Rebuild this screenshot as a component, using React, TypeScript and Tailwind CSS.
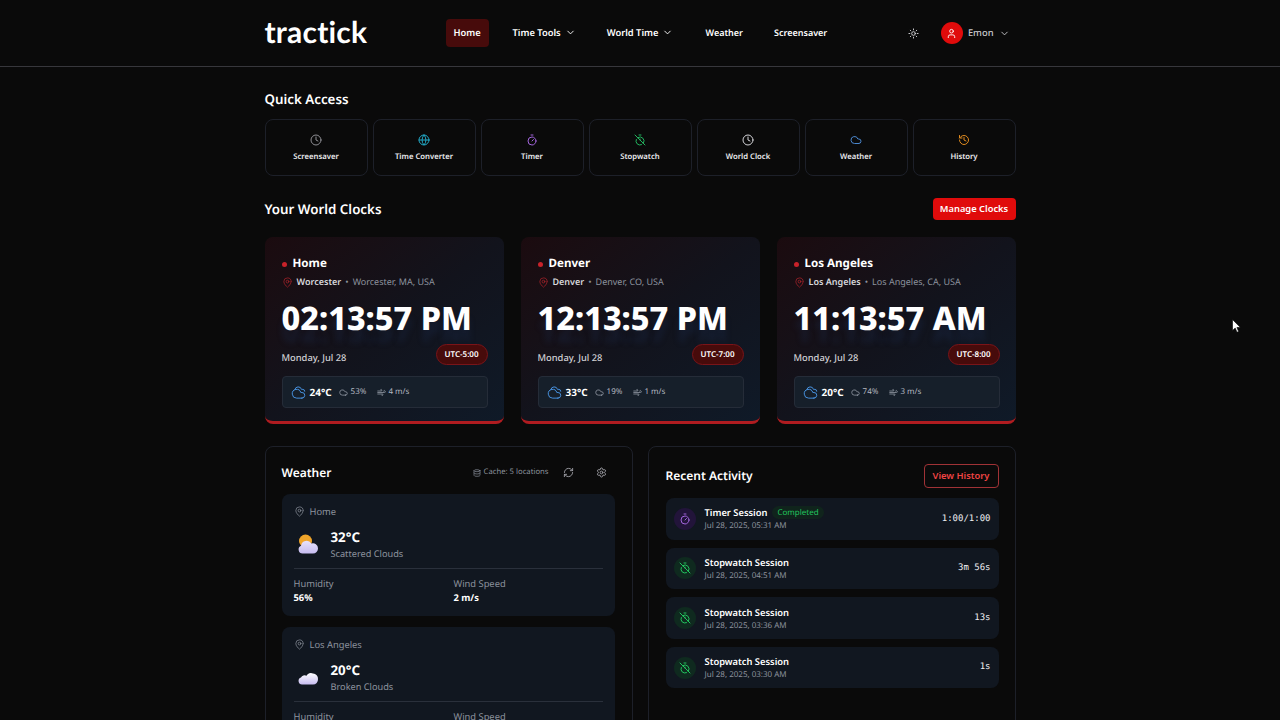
import {
  ChevronDown,
  Clock,
  Cloud,
  Cloudy,
  Database,
  Globe,
  History,
  MapPin,
  RefreshCw,
  Settings,
  Sun,
  Timer,
  TimerOff,
  User,
  Wind,
} from 'lucide-react';

const quickLinks = [
  { label: 'Screensaver', Icon: Clock, color: 'text-[#8f8f94]' },
  { label: 'Time Converter', Icon: Globe, color: 'text-[#22a7c4]' },
  { label: 'Timer', Icon: Timer, color: 'text-[#a265dc]' },
  { label: 'Stopwatch', Icon: TimerOff, color: 'text-[#22b35e]' },
  { label: 'World Clock', Icon: Clock, color: 'text-[#d4d4d8]' },
  { label: 'Weather', Icon: Cloud, color: 'text-[#4a86cc]' },
  { label: 'History', Icon: History, color: 'text-[#e08a1e]' },
];

const clocks = [
  { name: 'Home', city: 'Worcester', place: 'Worcester, MA, USA', time: '02:13:57 PM', utc: 'UTC-5:00', temp: '24°C', humidity: '53%', wind: '4 m/s' },
  { name: 'Denver', city: 'Denver', place: 'Denver, CO, USA', time: '12:13:57 PM', utc: 'UTC-7:00', temp: '33°C', humidity: '19%', wind: '1 m/s' },
  { name: 'Los Angeles', city: 'Los Angeles', place: 'Los Angeles, CA, USA', time: '11:13:57 AM', utc: 'UTC-8:00', temp: '20°C', humidity: '74%', wind: '3 m/s' },
];

const activity = [
  { title: 'Timer Session', date: 'Jul 28, 2025, 05:31 AM', value: '1:00/1:00', timer: true },
  { title: 'Stopwatch Session', date: 'Jul 28, 2025, 04:51 AM', value: '3m 56s', timer: false },
  { title: 'Stopwatch Session', date: 'Jul 28, 2025, 03:36 AM', value: '13s', timer: false },
  { title: 'Stopwatch Session', date: 'Jul 28, 2025, 03:30 AM', value: '1s', timer: false },
];

function WeatherArt({ sun }: { sun: boolean }) {
  const gradientId = sun ? 'cloud-sun' : 'cloud-plain';
  return (
    <svg width="24" height="24" viewBox="0 0 24 24">
      <defs>
        <linearGradient id={gradientId} x1="0" y1="0" x2="0" y2="1">
          <stop offset="0" stopColor={sun ? '#e8e2fb' : '#ffffff'} />
          <stop offset="1" stopColor="#c6bcf0" />
        </linearGradient>
      </defs>
      {sun && <circle cx="9.5" cy="9" r="6.5" fill="#f0a52a" />}
      {sun ? (
        <path
          d="M6.5 21.5a4 4 0 0 1-1.4-7.7 5.5 5.5 0 0 1 10.2-2.2 5 5 0 0 1 6.7 4.7 5 5 0 0 1-5 5.2z"
          fill={`url(#${gradientId})`}
        />
      ) : (
        <path
          d="M6 19.5a3.6 3.6 0 0 1-1-7 4 4 0 0 1 5.5-1.7 5 5 0 0 1 6.5-2.3 5.2 5.2 0 0 1 5 5.6 5 5 0 0 1-5 5.4z"
          fill={`url(#${gradientId})`}
        />
      )}
    </svg>
  );
}

function WeatherBlock({ name, temp, desc, humidity, wind, sun }: { name: string; temp: string; desc: string; humidity: string; wind: string; sun: boolean }) {
  return (
    <div className="rounded-lg bg-[#111720] px-[12px] pb-[11px] pt-[11px]">
      <div className="flex items-center gap-[5px] text-[9.33px] leading-[13px] text-[#8d939e]">
        <MapPin size={11} strokeWidth={1.5} />
        <span>{name}</span>
      </div>
      <div className="mt-[9px] flex items-center gap-[11px] pl-[2px]">
        <WeatherArt sun={sun} />
        <div className="pt-px">
          <div className="text-[13.33px] font-bold leading-[19px] text-white">{temp}</div>
          <div className="text-[9.2px] leading-[13px] text-[#8d939e]">{desc}</div>
        </div>
      </div>
      <div className="mt-[8px] grid grid-cols-[160px_1fr] border-t border-[#2a303b] pt-[8px]">
        <div>
          <div className="text-[9.33px] leading-[14px] text-[#8d939e]">Humidity</div>
          <div className="text-[9.33px] font-bold leading-[14px] text-white">{humidity}</div>
        </div>
        <div>
          <div className="text-[9.33px] leading-[14px] text-[#8d939e]">Wind Speed</div>
          <div className="text-[9.33px] font-bold leading-[14px] text-white">{wind}</div>
        </div>
      </div>
    </div>
  );
}

export default function App() {
  return (
    <div className="relative h-screen overflow-hidden bg-[#0a0a0a] font-['Noto_Sans',sans-serif] text-white [text-rendering:geometricPrecision]">
      <header className="flex h-[67px] justify-center border-b border-[#37373c]">
        <div className="flex w-[751px] items-center">
          <div className="w-[181px] -translate-y-px font-['Lato',sans-serif] text-[30px] font-bold leading-none tracking-[0.2px]">tractick</div>
          <nav className="flex items-center text-[9.33px] font-semibold">
            <div className="w-[43px] rounded bg-[#470b0b] py-[7px] text-center leading-[14px]">Home</div>
            <div className="ml-[24px] flex items-center gap-[4px]">Time Tools <ChevronDown size={11} /></div>
            <div className="ml-[31px] flex items-center gap-[4px]">World Time <ChevronDown size={11} /></div>
            <div className="ml-[32px] text-[9px]">Weather</div>
            <div className="ml-[31px] text-[9px]">Screensaver</div>
          </nav>
          <div className="ml-auto flex items-center pr-[6px]">
            <Sun size={11} className="text-[#d4d4d8]" />
            <div className="ml-[22px] flex h-[22px] w-[22px] items-center justify-center rounded-full bg-[#e00b0b]">
              <User size={11} />
            </div>
            <span className="ml-[5px] text-[9.33px] font-medium text-[#c8c8cc]">Emon</span>
            <ChevronDown size={11} className="ml-[5px] text-[#c8c8cc]" />
          </div>
        </div>
      </header>

      <main className="mx-auto w-[751px]">
        <h2 className="mt-[24px] text-[13.33px] font-semibold leading-[17px]">Quick Access</h2>
        <div className="mt-[11px] grid grid-cols-7 gap-[5px]">
          {quickLinks.map(({ label, Icon, color }) => (
            <div key={label} className="flex h-[57px] flex-col items-center rounded-lg border border-[#1d2029] pt-[14px]">
              <Icon size={12} className={color} />
              <span className="mt-[5px] text-[7.7px] font-semibold leading-[12px] text-[#ececef]">{label}</span>
            </div>
          ))}
        </div>

        <div className="mt-[22px] flex h-[22px] items-center justify-between">
          <h2 className="translate-y-px text-[13.33px] font-semibold">Your World Clocks</h2>
          <button className="h-[22px] w-[83px] rounded bg-[#e00b0b] text-[9.33px] font-semibold">Manage Clocks</button>
        </div>

        <div className="mt-[17px] grid grid-cols-3 gap-[17px]">
          {clocks.map((clock) => (
            <div
              key={clock.name}
              className="h-[187px] rounded-lg border-b-[3px] border-[#b01c20] bg-gradient-to-br from-[#1b0b0f] via-[#12131c] to-[#0f1a28] pl-[17px] pr-[16px] pt-[18px]"
            >
              <div className="flex translate-y-px items-center gap-[6px]">
                <span className="h-[5px] w-[5px] rounded-full bg-[#c8222a]" />
                <span className="text-[11.6px] font-bold leading-[16px]">{clock.name}</span>
              </div>
              <div className="mt-[4px] flex items-center text-[9px] leading-[14px]">
                <MapPin size={11} className="mr-[4px] text-[#b3242c]" strokeWidth={1.5} />
                <span className="font-semibold text-[#d8d8dc]">{clock.city}</span>
                <span className="mx-[4px] text-[#8d939e]">•</span>
                <span className="text-[#8d939e]">{clock.place}</span>
              </div>
              <div className="mt-[9px] text-[32.4px] font-extrabold leading-[40px] [text-shadow:0_12px_6px_rgba(30,50,90,0.3)]">{clock.time}</div>
              <div className="mt-[6px] flex items-end justify-between">
                <span className="mb-px text-[9.33px] font-medium leading-[13px] text-[#d0d0d4]">Monday, Jul 28</span>
                <span className="rounded-full border border-[#7a1418] bg-[#470b0b] px-[8px] py-[3px] text-[8px] font-semibold leading-[13px]">{clock.utc}</span>
              </div>
              <div className="mt-[11px] flex h-[32px] items-center rounded border border-[#252c38] bg-[#161f2a] px-[8px]">
                <Cloudy size={15} className="text-[#4a96e6]" strokeWidth={1.5} />
                <span className="ml-[4px] text-[10px] font-bold">{clock.temp}</span>
                <Cloud size={9} className="ml-[7px] text-[#9aa0ab]" />
                <span className="ml-[3px] text-[8px] text-[#b4b8c0]">{clock.humidity}</span>
                <Wind size={9} className="ml-[11px] text-[#9aa0ab]" />
                <span className="ml-[2px] text-[8px] text-[#b4b8c0]">{clock.wind}</span>
              </div>
            </div>
          ))}
        </div>

        <div className="mt-[22px] grid grid-cols-2 gap-[15px]">
          <section className="rounded-lg border border-[#1d2029] pb-[16px] pl-[16px] pr-[17px] pt-[16px]">
            <div className="flex h-[20px] items-center justify-between">
              <h3 className="text-[12px] font-semibold">Weather</h3>
              <div className="flex items-center text-[7.7px] text-[#8d939e]">
                <Database size={8} className="mr-[3px]" />
                <span>Cache: 5 locations</span>
                <RefreshCw size={11} className="ml-[14px] text-[#a0a0a6]" />
                <Settings size={11} className="ml-[22px] mr-[8px] text-[#a0a0a6]" />
              </div>
            </div>
            <div className="mt-[11px] flex flex-col gap-[11px]">
              <WeatherBlock name="Home" temp="32°C" desc="Scattered Clouds" humidity="56%" wind="2 m/s" sun />
              <WeatherBlock name="Los Angeles" temp="20°C" desc="Broken Clouds" humidity="74%" wind="3 m/s" sun={false} />
            </div>
          </section>

          <section className="h-[300px] rounded-lg border border-[#1d2029] pl-[17px] pr-[16px] pt-[17px]">
            <div className="flex h-[24px] items-center justify-between">
              <h3 className="text-[12px] font-semibold">Recent Activity</h3>
              <button className="h-[24px] w-[75px] rounded border border-[#a03236] text-[9.33px] font-semibold text-[#ef4444]">View History</button>
            </div>
            <div className="mt-[10px] flex flex-col gap-[8.17px]">
              {activity.map((item) => (
                <div key={item.date} className="flex h-[41.5px] items-center rounded-lg bg-[#111720] px-[8px]">
                  <div className={`flex h-[22px] w-[22px] items-center justify-center rounded-full ${item.timer ? 'bg-[#22143a]' : 'bg-[#0f2a1f]'}`}>
                    {item.timer ? <Timer size={12} className="text-[#a265dc]" /> : <TimerOff size={12} className="text-[#22c55e]" />}
                  </div>
                  <div className="ml-[9px] pt-[1px]">
                    <div className="flex items-center gap-[5px]">
                      <span className="text-[9.33px] font-semibold leading-[13px]">{item.title}</span>
                      {item.timer && (
                        <span className="rounded-full bg-[#10241c] px-[5px] text-[8px] leading-[13px] text-[#22c55e]">Completed</span>
                      )}
                    </div>
                    <div className="text-[8px] leading-[13px] text-[#8d939e]">{item.date}</div>
                  </div>
                  <span className="ml-auto pt-[1px] font-['DejaVu_Sans_Mono',monospace] text-[9px] font-medium text-[#ececef]">{item.value}</span>
                </div>
              ))}
            </div>
          </section>
        </div>
      </main>

      <svg className="absolute left-[1232px] top-[319px]" width="9" height="14" viewBox="0 0 9 14">
        <path d="M0.5 0.5v11l2.7-2.4 1.8 4.2 1.7-.7-1.8-4.1h3.5z" fill="#fff" stroke="#000" strokeWidth="0.6" />
      </svg>
    </div>
  );
}
